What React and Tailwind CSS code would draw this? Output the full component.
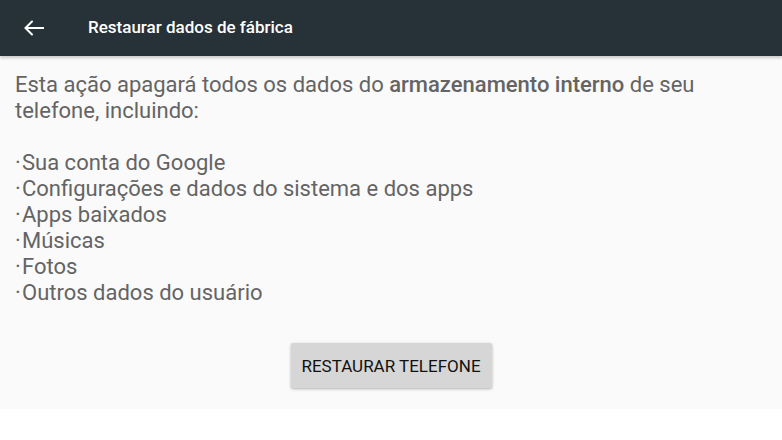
import React from 'react';

const items = [
  'Sua conta do Google',
  'Configurações e dados do sistema e dos apps',
  'Apps baixados',
  'Músicas',
  'Fotos',
  'Outros dados do usuário',
];

export default function App() {
  return (
    <div className="w-[782px] h-[440px] bg-white overflow-hidden" style={{ fontFamily: 'Roboto, "Noto Sans", sans-serif' }}>
      {/* Toolbar */}
      <div className="h-[56px] bg-[#263238] flex items-center shadow-[0_2px_3px_rgba(0,0,0,0.2)] relative z-10">
        <div className="w-[88px] flex items-center pl-[24px]">
          <svg width="20" height="16" viewBox="0 0 20 16" fill="none" stroke="white" strokeWidth="2" strokeLinecap="square">
            <path d="M2 8 H19" />
            <path d="M8 1.5 L1.5 8 L8 14.5" strokeLinecap="round" strokeLinejoin="miter" />
          </svg>
        </div>
        <span className="text-white text-[17px] font-medium">Restaurar dados de fábrica</span>
      </div>

      {/* Content */}
      <div className="bg-[#fafafa] h-[353px] px-[15px] pt-[16px] text-[#646464] text-[22px] leading-[26px]">
        <p>
          Esta ação apagará todos os dados do <span className="font-medium">armazenamento interno</span> de seu telefone, incluindo:
        </p>
        <div className="h-[26px]" />
        <ul>
          {items.map((item) => (
            <li key={item} className="flex">
              <span className="w-[7px]">·</span>
              {item}
            </li>
          ))}
        </ul>
        <div className="flex justify-center pt-[37px]">
          <button className="w-[201px] h-[45px] bg-[#d6d6d6] rounded-[2px] shadow-[0_1px_3px_rgba(0,0,0,0.3)] text-[#111111] text-[17px]">
            RESTAURAR TELEFONE
          </button>
        </div>
      </div>
    </div>
  );
}
